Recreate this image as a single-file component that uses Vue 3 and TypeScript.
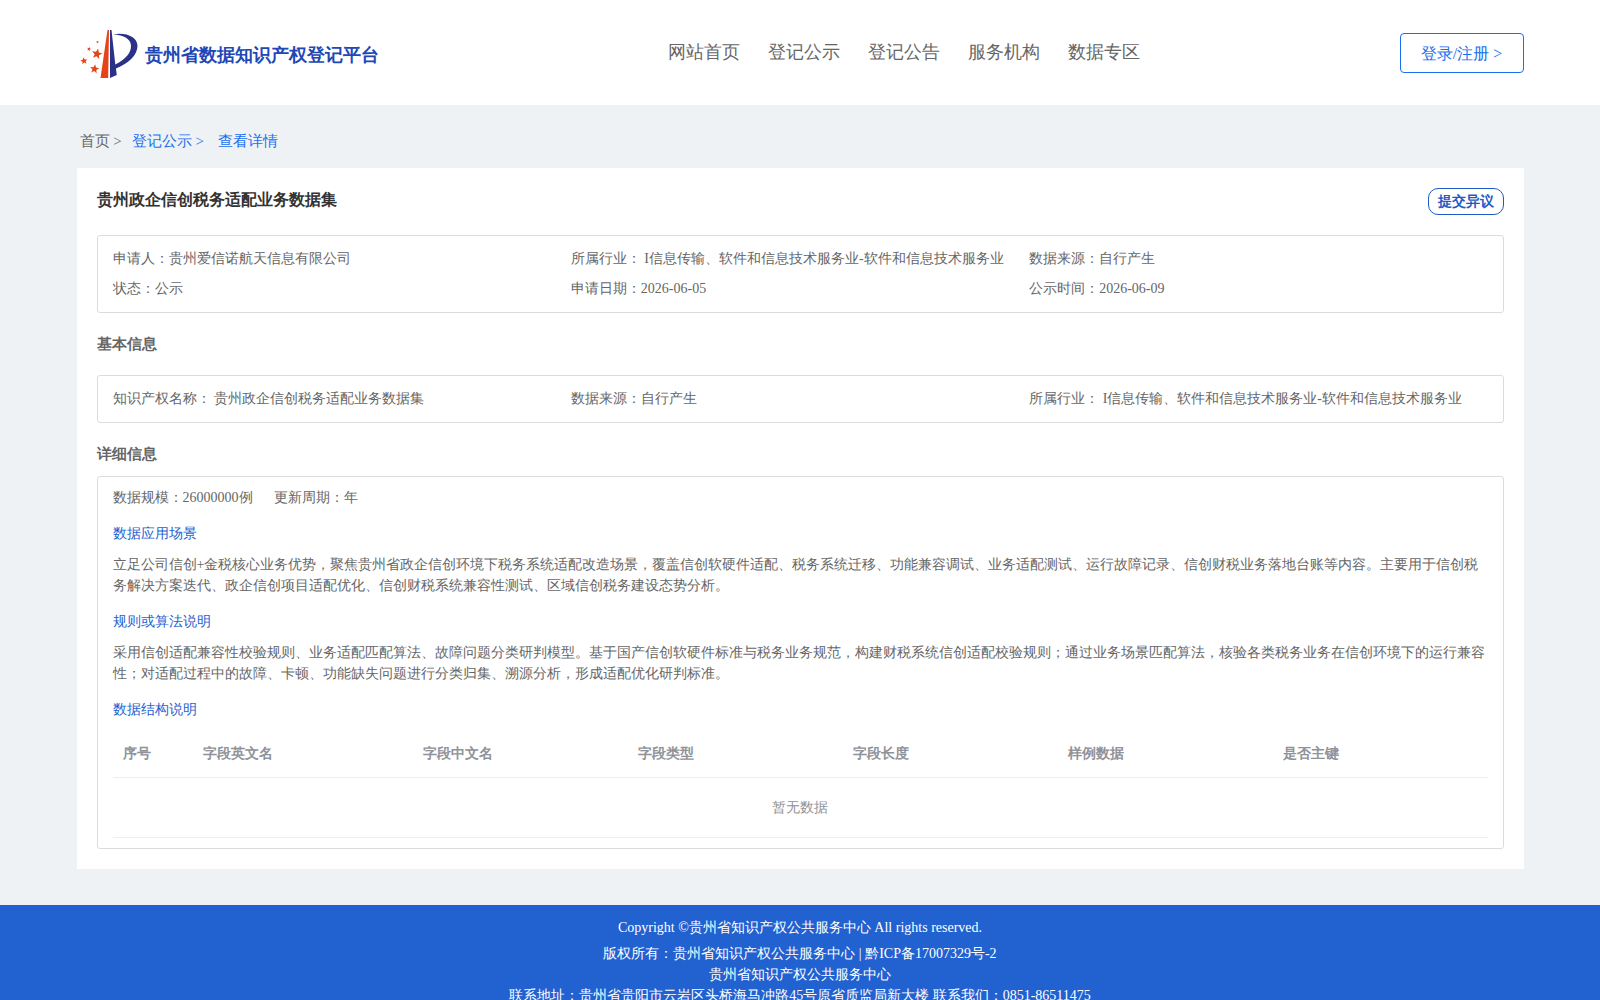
<script setup lang="ts">
interface Field {
  label: string
  value: string
}

interface Section {
  title: string
  text: string
}

const navItems: string[] = ['网站首页', '登记公示', '登记公告', '服务机构', '数据专区']

const summary: Field[] = [
  { label: '申请人：', value: '贵州爱信诺航天信息有限公司' },
  { label: '所属行业： ', value: 'I信息传输、软件和信息技术服务业-软件和信息技术服务业' },
  { label: '数据来源：', value: '自行产生' },
  { label: '状态：', value: '公示' },
  { label: '申请日期：', value: '2026-06-05' },
  { label: '公示时间：', value: '2026-06-09' },
]

const basics: Field[] = [
  { label: '知识产权名称： ', value: '贵州政企信创税务适配业务数据集' },
  { label: '数据来源：', value: '自行产生' },
  { label: '所属行业： ', value: 'I信息传输、软件和信息技术服务业-软件和信息技术服务业' },
]

const sections: Section[] = [
  {
    title: '数据应用场景',
    text: '立足公司信创+金税核心业务优势，聚焦贵州省政企信创环境下税务系统适配改造场景，覆盖信创软硬件适配、税务系统迁移、功能兼容调试、业务适配测试、运行故障记录、信创财税业务落地台账等内容。主要用于信创税务解决方案迭代、政企信创项目适配优化、信创财税系统兼容性测试、区域信创税务建设态势分析。',
  },
  {
    title: '规则或算法说明',
    text: '采用信创适配兼容性校验规则、业务适配匹配算法、故障问题分类研判模型。基于国产信创软硬件标准与税务业务规范，构建财税系统信创适配校验规则；通过业务场景匹配算法，核验各类税务业务在信创环境下的运行兼容性；对适配过程中的故障、卡顿、功能缺失问题进行分类归集、溯源分析，形成适配优化研判标准。',
  },
]

const columns: string[] = ['序号', '字段英文名', '字段中文名', '字段类型', '字段长度', '样例数据', '是否主键']
</script>

<template>
  <div class="page">
    <header class="header">
      <div class="container header-inner">
        <a class="brand" href="#">
          <svg class="logo" viewBox="0 0 60 52" aria-hidden="true">
            <defs>
              <path id="star" d="M0-5 1.3-1.7 4.8-1.5 2 .7 2.9 4 0 2.1-2.9 4-2 .7-4.8-1.5-1.3-1.7z" />
            </defs>
            <g fill="#e64416">
              <path d="M27.5 2H29L28.2 50H20.5z" />
              <use href="#star" transform="translate(17 26) rotate(12) scale(1.1)" />
              <use href="#star" transform="translate(4 33) rotate(-8) scale(.75)" />
              <use href="#star" transform="translate(14.500 41) rotate(8) scale(.95)" />
              <use href="#star" transform="translate(9 21) rotate(20) scale(.45)" />
              <use href="#star" transform="translate(17.500 14) scale(.3)" />
            </g>
            <path
              fill="#2a3187"
              d="M30 2H31.500L35.300 36.500C46 31 51 25 51 18C51 11 44 7 33 6.500C46 4 57.500 9 57.500 18C57.500 27 48 36 35.900 40.500L36.800 47L30 50z"
            />
          </svg>
          <span>贵州省数据知识产权登记平台</span>
        </a>
        <nav class="nav">
          <a v-for="item in navItems" :key="item" href="#">{{ item }}</a>
        </nav>
        <button class="login" type="button">登录/注册 &gt;</button>
      </div>
    </header>

    <main class="container">
      <nav class="crumbs">
        <a class="home" href="#">首页 &gt;</a>
        <a href="#">登记公示 &gt;</a>
        <a class="current" href="#">查看详情</a>
      </nav>

      <article class="card">
        <div class="title-row">
          <h1>贵州政企信创税务适配业务数据集</h1>
          <button class="objection" type="button">提交异议</button>
        </div>

        <div class="box grid">
          <div v-for="f in summary" :key="f.label">{{ f.label }}{{ f.value }}</div>
        </div>

        <h2>基本信息</h2>
        <div class="box grid">
          <div v-for="f in basics" :key="f.label">{{ f.label }}{{ f.value }}</div>
        </div>

        <h2 class="tight">详细信息</h2>
        <div class="box detail">
          <div class="scale">
            <span>数据规模：26000000例</span>
            <span>更新周期：年</span>
          </div>
          <section v-for="s in sections" :key="s.title">
            <h3>{{ s.title }}</h3>
            <p>{{ s.text }}</p>
          </section>
          <h3>数据结构说明</h3>
          <table>
            <thead>
              <tr>
                <th v-for="c in columns" :key="c" scope="col">{{ c }}</th>
              </tr>
            </thead>
            <tbody>
              <tr>
                <td :colspan="columns.length">暂无数据</td>
              </tr>
            </tbody>
          </table>
        </div>
      </article>
    </main>

    <footer class="footer">
      <p class="copyright">Copyright ©贵州省知识产权公共服务中心 All rights reserved.</p>
      <p>版权所有：贵州省知识产权公共服务中心 | <a href="#">黔ICP备17007329号-2</a></p>
      <p>贵州省知识产权公共服务中心</p>
      <p>联系地址：贵州省贵阳市云岩区头桥海马冲路45号原省质监局新大楼 联系我们：0851-86511475</p>
    </footer>
  </div>
</template>

<style>
body {
  margin: 0;
  background: #eef2f5;
}
</style>

<style scoped>
.page {
  font-family: "Liberation Serif", serif;
  font-size: 14px;
  line-height: 21px;
  color: #666;
}

.page * {
  box-sizing: border-box;
}

a {
  color: inherit;
  text-decoration: none;
}

button {
  font-family: inherit;
  background: #fff;
  cursor: pointer;
}

h1,
h2,
h3,
p {
  margin: 0;
}

.container {
  width: 92%;
  max-width: 1447px;
  margin: 0 auto;
}

.header {
  background: #fff;
}

.header-inner {
  display: flex;
  align-items: center;
  justify-content: space-between;
  height: 105px;
}

.brand {
  display: flex;
  align-items: center;
  gap: 5px;
  padding: 2px 0 0 3px;
  font-size: 18px;
  line-height: 24px;
  font-weight: bold;
  color: #2147b5;
}

.brand span {
  padding-top: 2px;
}

.logo {
  width: 60px;
  height: 52px;
}

.nav {
  display: flex;
  gap: 28px;
  margin-left: 30px;
  padding-bottom: 2px;
  font-size: 18px;
  line-height: 24px;
}

.login {
  width: 124px;
  height: 40px;
  padding: 3px 0 0;
  border: 1px solid #1a6fee;
  border-radius: 4px;
  font-size: 16px;
  color: #1a6fee;
}

.crumbs {
  display: flex;
  align-items: center;
  gap: 10px;
  height: 63px;
  padding: 10px 3px 0;
  font-size: 15px;
  color: #1a6fee;
}

.home {
  color: #666;
}

.current {
  margin-left: 4px;
}

.card {
  padding: 20px;
  background: #fff;
}

.title-row {
  display: flex;
  align-items: flex-start;
  justify-content: space-between;
  height: 47px;
}

h1 {
  font-size: 16px;
  line-height: 24px;
  color: #333;
}

.objection {
  width: 76px;
  height: 27px;
  padding: 0;
  border: 1px solid #1f5ac4;
  border-radius: 10px;
  font-size: 14px;
  font-weight: bold;
  color: #1f5ac4;
}

.box {
  padding: 8px 15px;
  border: 1px solid #dcdcdc;
  border-radius: 3px;
}

.grid {
  display: grid;
  grid-template-columns: repeat(3, 1fr);
  line-height: 30px;
}

h2 {
  height: 62px;
  font-size: 15px;
  line-height: 62px;
}

h2.tight {
  height: 53px;
}

.detail {
  padding: 10px 15px;
}

.scale {
  display: flex;
  gap: 21px;
}

h3 {
  padding: 15px 0 10px;
  font-size: 14px;
  font-weight: normal;
  color: #1f5fd0;
}

table {
  width: 100%;
  table-layout: fixed;
  border-collapse: separate;
  border-spacing: 0;
  color: #909399;
}

th,
td {
  padding: 0 10px;
  border-bottom: 1px solid #ebeef5;
}

th {
  height: 48px;
  text-align: left;
}

th:first-child {
  width: 80px;
}

th:nth-child(2) {
  width: 16%;
}

td {
  height: 60px;
  text-align: center;
}

.footer {
  margin-top: 36px;
  padding: 12px 0 20px;
  background: #2161d0;
  color: #fff;
  text-align: center;
}

.copyright {
  margin-bottom: 5px;
}
</style>
